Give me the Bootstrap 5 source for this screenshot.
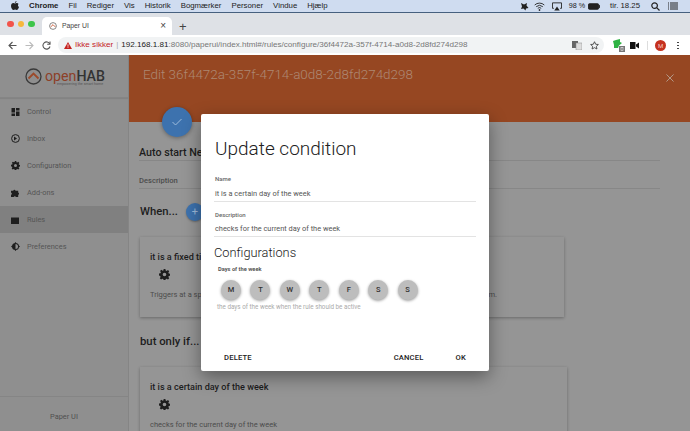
<!DOCTYPE html>
<html lang="da"><head><meta charset="utf-8">
<link rel="stylesheet" href="https://cdn.jsdelivr.net/npm/bootstrap@5.3.0/dist/css/bootstrap.min.css">
<style>
html,body{margin:0;height:431px;overflow:hidden;font-family:Roboto,"Liberation Sans",sans-serif;background:#959595}
.shell{width:690px;height:431px;position:relative;overflow:hidden}
.macbar{height:12px;background:#cfdcf0;font:400 7.8px/12px "Liberation Sans",sans-serif;color:#222;padding:0 12px 0 11px;gap:10px}
.macbar b{font-weight:700}
.macline{height:1px;background:#46607f}
.mactray{margin-left:auto;color:#222}
.mg3{margin-left:3px}.mg5{margin-left:5px}.mg7{margin-left:7px}.mg8{margin-left:8px}.mg10{margin-left:10px}.mg11{margin-left:11px}
.pct{font-size:7.2px}
.tabstrip{height:22px;background:#dee1e6;padding-left:7px}
.dots{width:35px;height:22px;gap:4.200px}
.dots i{width:6.500px;height:6.500px;border-radius:50%;display:block}
.dotr{background:#f2544b}.doty{background:#f6b73c}.dotg{background:#3ec54a}
.chrometab{width:130px;height:18px;margin-top:4px;background:#fff;border-radius:5px 5px 0 0;font:6.800px/18px "Liberation Sans",sans-serif;color:#444;padding:0 6px 0 7px}
.tabname{margin-left:5px}
.tabx{font-size:10px;color:#444}
.tabplus{font:300 13px/22px "Liberation Sans",sans-serif;color:#444;margin:3px 0 0 7px}
.toolbar{height:20px;background:#fff;padding:0 0 0 8px}
.omni{height:16px;width:546px;margin-left:7px;background:#f1f3f4;border-radius:8px;font:8.100px/16px "Liberation Sans",sans-serif;color:#777;padding:0 5px 0 6px}
.omni .warn{color:#c5221f;margin-left:3px}.omni .host{color:#222}
.pipe{color:#aaa;margin:0 3px}
.sepbar{width:1px;height:9px;background:#ddd}
.avatar{width:11px;height:11px;background:#c5311f;color:#f5c9c4;font-size:6px;line-height:11px;text-align:center}
.kebab{width:2px;height:9px;background:radial-gradient(circle,#444 1px,transparent 1px) 0 0/2px 3px}
.appbody{height:376px}
.sidenav{width:129px;flex:none;background:#8f8f8f;border-right:1px solid #858585;font-size:7.400px;color:#555;font-weight:400}
.logo{height:43px;border-bottom:1px solid #858585;box-shadow:0 1px 1px rgba(0,0,0,.08);padding-left:25px}
.logotext{font-size:14.200px;line-height:16px;color:#8d4028;position:relative;margin-left:3px}
.logotext b{font-weight:500;color:#333}
.logotext small{position:absolute;left:12px;top:14px;font-size:3.600px;line-height:5px;color:#555;white-space:nowrap}
.navrow{height:27px;padding-left:11px;gap:7px}
.navrow svg{width:9px;flex:none}
.navrow.on{background:#808080}
.sidefoot{height:35px;border-top:1px solid #858585;text-align:center;line-height:39px;color:#505050}
.mainpane{background:#959595;position:relative;min-width:0}
.hero{height:67px;background:#964722;color:#ad8873;padding:10px 16px 0 14px;font-size:13.450px;line-height:20px;font-weight:300}
.heroclose{margin-top:9px}
.fabmain{position:absolute;left:33px;top:52px;width:30px;height:30px;border-radius:50%;background:#3d72ae;box-shadow:0 1px 4px rgba(0,0,0,.35)}
.fieldrow{margin:0 30px 0 10px;border-bottom:1px solid #878787;color:#1d1d1d}
.headtitle{height:23px;padding-top:7px;line-height:15px;font-size:10.700px;font-weight:500;margin-top:16px;white-space:nowrap}
.descrow{height:28px;padding-top:14px;line-height:12px;font-size:7.600px;color:#4c4c4c;font-weight:500}
.secthead{font-size:11.300px;font-weight:500;color:#1d1d1d;padding-left:11px;line-height:18px;white-space:nowrap}
.whenrow{margin-top:14px}.butrow{margin-top:16px}
.fabsmall{width:18px;height:18px;border-radius:50%;background:#3d72ae;color:#9ebbdb;font-size:11px;font-weight:400;line-height:18px;text-align:center;box-shadow:0 1px 2px rgba(0,0,0,.3);margin-left:8px}
.rulecard{background:#959595;margin:16px 0 0 11px;box-shadow:0 1px 3px rgba(0,0,0,.3);padding:13px 10px;font-size:7.500px;line-height:12px;color:#4c4c4c;white-space:nowrap}
.rulecard h6{font-size:9.100px;font-weight:500;color:#1d1d1d;margin:0;line-height:14px}
.cardone{height:80px;width:424px}
.cardtwo{height:90px;width:427px}
.gear{display:block;margin:5px 0 9px 9px}
.trailm{margin-right:57px}
.dlg{position:absolute;left:201px;top:114px;width:288px;height:257px;background:#fff;border-radius:2px;box-shadow:0 6px 18px rgba(0,0,0,.4);padding:0 13px;color:#212121}
.dlg h2{font-size:19px;font-weight:300;line-height:28px;margin:21px 0 0 1px}
.flabel{font-size:6px;font-weight:500;color:#666;line-height:8px;margin:12px 0 0 1px}
.flabel.second{margin-top:9px}
.fval{font-size:7.400px;line-height:13px;color:#555;padding:3.500px 1px 1px;border-bottom:1px solid #e3e3e3}
.dlg h3{font-size:12.800px;font-weight:300;line-height:18px;margin:7px 0 0 0}
.daylabel{font-size:5.700px;font-weight:700;color:#555;line-height:7px;margin:3.500px 0 0 4px}
.dayrow{gap:9.450px;margin:7px 0 0 7px}
.daybtn{width:20px;height:20px;border-radius:50%;background:#bdbdbd;box-shadow:0 1px 3px rgba(0,0,0,.4);font-size:7.500px;font-weight:500;color:#333;text-align:center;line-height:20px;flex:none}
.hintline{font-size:6.300px;color:#aaa;line-height:10px;margin:2.500px 0 0 3px}
.dlgfoot{position:absolute;left:0;right:0;bottom:8px;font-size:7.600px;font-weight:500;color:#222;padding:0 23px;letter-spacing:.2px}
.okgap{margin-left:32px}
</style></head><body>
<div class="shell">
 <div class="macbar d-flex align-items-center">
  <svg width="8" height="10" viewBox="0 0 8 10"><path fill="#222" d="M5.500 0c.1.900-.7 1.900-1.600 1.900C3.800 1 4.700.1 5.500 0zM4 2.400c.5 0 1-.4 1.800-.4.700 0 1.400.4 1.800 1-.9.600-1 2.300.4 3-.4 1.200-1.300 3-2.300 3-.6 0-.9-.4-1.600-.4s-1 .4-1.600.4C1.400 9 0 7 0 5c0-1.800 1.100-2.900 2.300-2.900.7 0 1.200.3 1.700.3z"/></svg>
  <b>Chrome</b><span>Fil</span><span>Rediger</span><span>Vis</span><span>Historik</span><span>Bogmærker</span><span>Personer</span><span>Vindue</span><span>Hjælp</span>
  <div class="mactray d-flex align-items-center">
   <svg width="9" height="9" viewBox="0 0 9 9"><path fill="#222" d="M1 1l3 1.500L7 1 6.500 3.500 8.500 6 6 6.500 5.500 8.500 3.500 6.500 1 7 2 4.500z"/></svg>
   <svg class="mg5" width="11" height="9" viewBox="0 0 11 9" fill="none" stroke="#222" stroke-width=".9"><path d="M.7 3a7 7 0 0 1 9.600 0M2.200 4.700a5 5 0 0 1 6.600 0M3.800 6.300a2.500 2.500 0 0 1 3.400 0"/><circle cx="5.500" cy="8" r=".6" fill="#222"/></svg>
   <svg class="mg7" width="10" height="9" viewBox="0 0 11 9"><path fill="none" stroke="#222" d="M2 6.500H.5v-6h10v6H9"/><path fill="#222" d="M5.500 4.500L8.500 9h-6z"/></svg>
   <span class="mg7 pct">98 %</span>
   <svg class="mg3" width="12" height="7" viewBox="0 0 13 7"><rect x=".5" y=".5" width="11" height="6" rx="1" fill="#222" stroke="#222"/><rect x="12" y="2" width="1" height="3" fill="#222"/></svg>
   <span class="mg10">tir. 18.25</span>
   <svg class="mg11" width="9" height="9" viewBox="0 0 9 9" fill="none" stroke="#222" stroke-width="1.200"><circle cx="3.600" cy="3.600" r="2.800"/><path d="M5.700 5.700L8.500 8.500"/></svg>
   <svg class="mg8" width="10" height="8" viewBox="0 0 10 8" fill="none" stroke="#222"><path d="M0 1h1M2 1h8M0 3h1M2 3h8M0 5h1M2 5h8M0 7h1M2 7h8"/></svg>
  </div>
 </div>
 <div class="macline"></div>
 <div class="tabstrip d-flex align-items-start">
  <div class="dots d-flex align-items-center"><i class="dotr"></i><i class="doty"></i><i class="dotg"></i></div>
  <div class="chrometab d-flex align-items-center">
   <svg width="8" height="8" viewBox="0 0 9 9" fill="none" stroke="#c9522c"><circle cx="4.500" cy="4.500" r="3.800" stroke="#777"/><path d="M2 5.500l2.500-2.500L7 5.500"/></svg>
   <span class="tabname flex-grow-1">Paper UI</span><span class="tabx">×</span>
  </div>
  <span class="tabplus">+</span>
 </div>
 <div class="toolbar d-flex align-items-center">
  <svg width="9" height="9" viewBox="0 0 9 9" fill="none" stroke="#555" stroke-width="1.100"><path d="M8.500 4.500H1M4.500 1L1 4.500 4.500 8"/></svg>
  <svg class="mg8" width="9" height="9" viewBox="0 0 9 9" fill="none" stroke="#bbb" stroke-width="1.100"><path d="M.5 4.500H8M4.500 1L8 4.500 4.500 8"/></svg>
  <svg class="mg8" width="9" height="9" viewBox="0 0 9 9" fill="none" stroke="#555" stroke-width="1.100"><path d="M7.800 3A3.600 3.600 0 1 0 8 5.500"/><path d="M8 .5V3.300H5.200"/></svg>
  <div class="omni d-flex align-items-center text-nowrap">
   <svg width="8" height="7" viewBox="0 0 8 7"><path fill="#c5221f" d="M4 0l4 7H0z"/><path fill="#fff" d="M3.600 2.300h.8v2.500h-.8zM3.600 5.200h.8V6h-.8z"/></svg>
   <span class="warn">Ikke sikker</span><span class="pipe">|</span>
   <span><span class="host">192.168.1.81</span>:8080/paperui/index.html#/rules/configure/36f4472a-357f-4714-a0d8-2d8fd274d298</span>
   <svg class="ms-auto" width="10" height="10" viewBox="0 0 10 10"><rect x="0" y="1" width="6" height="7" fill="#666"/><rect x="4" y="3" width="6" height="7" fill="#ddd" stroke="#888" stroke-width=".5"/></svg>
   <svg class="mg8" width="9" height="9" viewBox="0 0 10 10" fill="none" stroke="#444"><path d="M5 .8l1.300 2.800 3 .3-2.200 2 .6 3L5 7.400 2.300 8.900l.6-3-2.200-2 3-.3z"/></svg>
  </div>
  <svg class="mg8" width="13" height="14" viewBox="0 0 13 14"><path fill="#2fb344" d="M1 3l3-1 4-1v3l2 1-3 2.500-1 2.500H2V7z"/><rect x="7" y="8" width="6" height="6" fill="#777"/><rect x="9" y="9.500" width="2" height="3" fill="none" stroke="#eee" stroke-width=".6"/></svg>
  <svg class="mg5" width="9" height="7" viewBox="0 0 9 7"><path fill="#111" d="M0 0h5.500v7H0zM6 2.500L9 .5v6L6 4.500z"/></svg>
  <span class="sepbar mg8"></span>
  <span class="avatar mg7 rounded-circle">M</span>
  <span class="kebab mg11"></span>
 </div>
 <div class="appbody d-flex">
  <aside class="sidenav d-flex flex-column">
   <div class="logo d-flex align-items-center">
    <svg width="17" height="17" viewBox="0 0 17 17" fill="none"><circle cx="8.500" cy="8.500" r="7.500" stroke="#3a3a3a" stroke-width="1.300"/><path d="M3.500 10.500l5-5 5 5" stroke="#9c4a2b" stroke-width="1.800"/></svg>
    <span class="logotext"><span>open</span><b>HAB</b><small>empowering the smart home</small></span>
   </div>
   <div class="flex-grow-1">
    <div class="navrow d-flex align-items-center"><svg height="8" viewBox="0 0 8 8" fill="#1e1e1e"><path d="M0 0h3.500v4.500H0zM4.500 0H8v2.500H4.500zM4.500 3.500H8V8H4.500zM0 5.500h3.500V8H0z"/></svg><span>Control</span></div>
    <div class="navrow d-flex align-items-center"><svg height="9" viewBox="0 0 9 9" fill="none" stroke="#1e1e1e"><circle cx="4.500" cy="4.500" r="3.900"/><path fill="#1e1e1e" stroke="none" d="M3 2.500l3 2-3 2z"/></svg><span>Inbox</span></div>
    <div class="navrow d-flex align-items-center"><svg height="9" viewBox="0 0 24 24" fill="#1e1e1e"><path fill-rule="evenodd" d="M10 0h4l.6 3.200 2.200 1 2.700-1.900 2.800 2.800-1.900 2.700 1 2.200 3.200.6v4l-3.200.6-1 2.200 1.900 2.700-2.800 2.800-2.700-1.900-2.200 1-.6 3.200h-4l-.6-3.200-2.200-1-2.700 1.900-2.800-2.800 1.900-2.700-1-2.200L0 14v-4l3.200-.6 1-2.200-1.900-2.700 2.800-2.800 2.700 1.900 2.200-1zM12 8a4 4 0 1 0 0 8 4 4 0 0 0 0-8z"/></svg><span>Configuration</span></div>
    <div class="navrow d-flex align-items-center"><svg height="9" viewBox="0 0 10 10" fill="#1e1e1e"><path d="M0 3h2.500a1.300 1.300 0 0 1 2.500 0H8v2a1.300 1.300 0 0 1 0 2.500V10H5.500a1.300 1.300 0 0 0-2.500 0H0V7.500a1.300 1.300 0 0 0 0-2.500z"/></svg><span>Add-ons</span></div>
    <div class="navrow on d-flex align-items-center"><svg height="8" viewBox="0 0 9 8" fill="#1e1e1e"><path d="M0 1l1 1 1-1 1 1 1-1 1 1 1-1 1 1 1-1v7H0z"/></svg><span>Rules</span></div>
    <div class="navrow d-flex align-items-center"><svg height="9" viewBox="0 0 9 9" fill="#1e1e1e"><circle cx="4.500" cy="4.500" r="3.500"/><path d="M4.500 0l1 1.200h-2zM4.500 9l1-1.200h-2zM0 4.500l1.200-1v2zM9 4.500l-1.200-1v2z"/><path fill="#8f8f8f" d="M4.500 2a2.500 2.500 0 0 1 0 5z"/></svg><span>Preferences</span></div>
   </div>
   <div class="sidefoot">Paper UI</div>
  </aside>
  <main class="mainpane flex-grow-1">
   <div class="hero d-flex justify-content-between align-items-start">
    <span>Edit 36f4472a-357f-4714-a0d8-2d8fd274d298</span>
    <svg class="heroclose" width="8" height="8" viewBox="0 0 9 9" stroke="#b8a294" stroke-width="1"><path d="M.5.500l8 8M8.500.500l-8 8"/></svg>
   </div>
   <div class="fabmain d-flex align-items-center justify-content-center"><svg width="10" height="8" viewBox="0 0 10 8" fill="none" stroke="#9ebbdb" stroke-width="1"><path d="M.5 4l3 3L9.500 1"/></svg></div>
   <div class="fieldrow headtitle">Auto start Netflix</div>
   <div class="fieldrow descrow">Description</div>
   <div class="secthead whenrow d-flex align-items-center">When...<span class="fabsmall">+</span></div>
   <div class="rulecard cardone"><h6>it is a fixed time of day</h6>
    <svg class="gear" width="11" height="11" viewBox="0 0 24 24" fill="#1e1e1e"><path fill-rule="evenodd" d="M10 0h4l.6 3.200 2.200 1 2.700-1.900 2.800 2.800-1.900 2.700 1 2.200 3.200.6v4l-3.200.6-1 2.200 1.900 2.700-2.800 2.800-2.700-1.900-2.200 1-.6 3.200h-4l-.6-3.200-2.200-1-2.700 1.900-2.800-2.800 1.900-2.700-1-2.200L0 14v-4l3.200-.6 1-2.200-1.900-2.700 2.800-2.800 2.700 1.900 2.200-1zM12 8a4 4 0 1 0 0 8 4 4 0 0 0 0-8z"/></svg>
    <div class="d-flex justify-content-between"><span>Triggers at a specified time</span><span class="trailm">m.</span></div></div>
   <div class="secthead butrow">but only if...</div>
   <div class="rulecard cardtwo"><h6>it is a certain day of the week</h6>
    <svg class="gear" width="11" height="11" viewBox="0 0 24 24" fill="#1e1e1e"><path fill-rule="evenodd" d="M10 0h4l.6 3.200 2.200 1 2.700-1.900 2.800 2.800-1.900 2.700 1 2.200 3.200.6v4l-3.200.6-1 2.200 1.900 2.700-2.800 2.800-2.700-1.900-2.200 1-.6 3.200h-4l-.6-3.200-2.200-1-2.700 1.900-2.800-2.800 1.900-2.700-1-2.200L0 14v-4l3.200-.6 1-2.200-1.900-2.700 2.800-2.800 2.700 1.900 2.200-1zM12 8a4 4 0 1 0 0 8 4 4 0 0 0 0-8z"/></svg>
    <div>checks for the current day of the week</div></div>
  </main>
 </div>
 <div class="dlg">
  <h2>Update condition</h2>
  <div class="flabel">Name</div>
  <div class="fval">it is a certain day of the week</div>
  <div class="flabel second">Description</div>
  <div class="fval">checks for the current day of the week</div>
  <h3>Configurations</h3>
  <div class="daylabel">Days of the week</div>
  <div class="dayrow d-flex"><span class="daybtn">M</span><span class="daybtn">T</span><span class="daybtn">W</span><span class="daybtn">T</span><span class="daybtn">F</span><span class="daybtn">S</span><span class="daybtn">S</span></div>
  <div class="hintline">the days of the week when the rule should be active</div>
  <div class="dlgfoot d-flex"><span>DELETE</span><span class="ms-auto">CANCEL</span><span class="okgap">OK</span></div>
 </div>
</div>
</body></html>
